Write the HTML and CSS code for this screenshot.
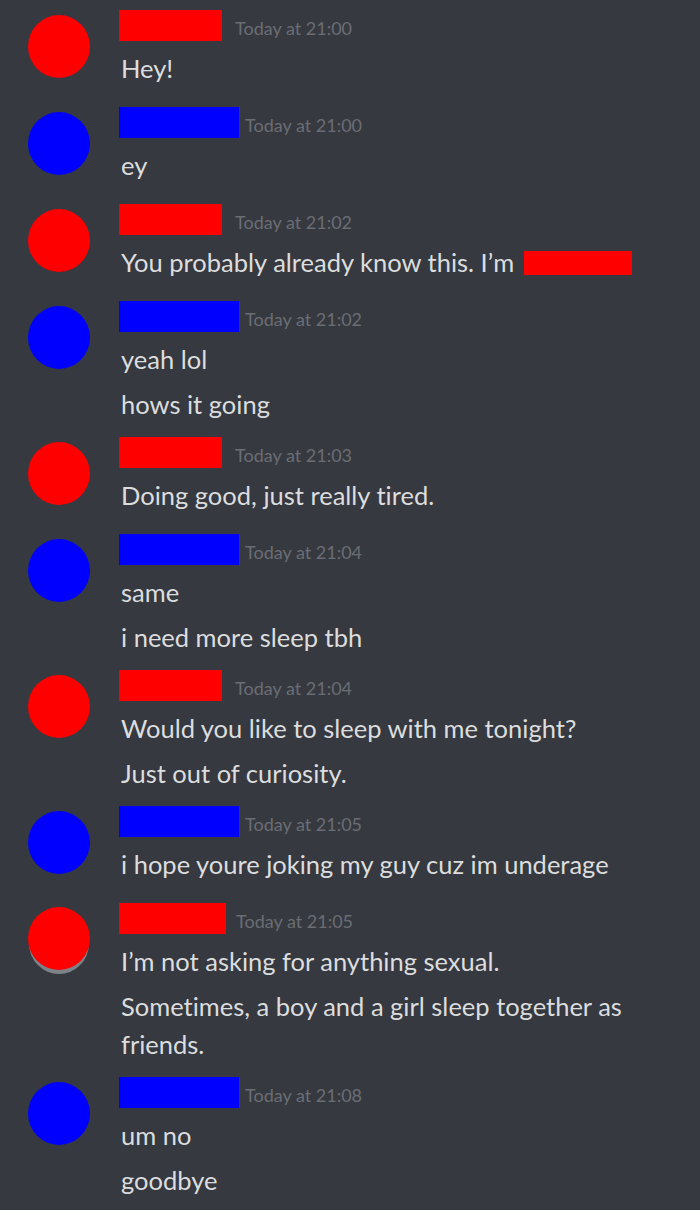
FILE: index.html
```html
<!DOCTYPE html>
<html lang="en">
<head>
<meta charset="utf-8">
<title>Chat</title>
<link rel="stylesheet" href="styles.css">
</head>
<body>
<main class="chat">
  <section class="group red">
    <div class="avatar"></div>
    <div class="body">
      <div class="header"><span class="name"></span><span class="time">Today at 21:00</span></div>
      <p class="msg">Hey!</p>
    </div>
  </section>
  <section class="group blue">
    <div class="avatar"></div>
    <div class="body">
      <div class="header"><span class="name"></span><span class="time">Today at 21:00</span></div>
      <p class="msg">ey</p>
    </div>
  </section>
  <section class="group red">
    <div class="avatar"></div>
    <div class="body">
      <div class="header"><span class="name"></span><span class="time">Today at 21:02</span></div>
      <p class="msg">You probably already know this. I’m <span class="redact"></span></p>
    </div>
  </section>
  <section class="group blue">
    <div class="avatar"></div>
    <div class="body">
      <div class="header"><span class="name"></span><span class="time">Today at 21:02</span></div>
      <p class="msg">yeah lol</p>
      <p class="msg">hows it going</p>
    </div>
  </section>
  <section class="group red">
    <div class="avatar"></div>
    <div class="body">
      <div class="header"><span class="name"></span><span class="time">Today at 21:03</span></div>
      <p class="msg">Doing good, just really tired.</p>
    </div>
  </section>
  <section class="group blue">
    <div class="avatar"></div>
    <div class="body">
      <div class="header"><span class="name"></span><span class="time">Today at 21:04</span></div>
      <p class="msg">same</p>
      <p class="msg">i need more sleep tbh</p>
    </div>
  </section>
  <section class="group red">
    <div class="avatar"></div>
    <div class="body">
      <div class="header"><span class="name"></span><span class="time">Today at 21:04</span></div>
      <p class="msg">Would you like to sleep with me tonight?</p>
      <p class="msg">Just out of curiosity.</p>
    </div>
  </section>
  <section class="group blue">
    <div class="avatar"></div>
    <div class="body">
      <div class="header"><span class="name"></span><span class="time">Today at 21:05</span></div>
      <p class="msg">i hope youre joking my guy cuz im underage</p>
    </div>
  </section>
  <section class="group red wide">
    <div class="avatar shadowed"></div>
    <div class="body">
      <div class="header"><span class="name"></span><span class="time">Today at 21:05</span></div>
      <p class="msg">I’m not asking for anything sexual.</p>
      <p class="msg">Sometimes, a boy and a girl sleep together as friends.</p>
    </div>
  </section>
  <section class="group blue">
    <div class="avatar"></div>
    <div class="body">
      <div class="header"><span class="name"></span><span class="time">Today at 21:08</span></div>
      <p class="msg">um no</p>
      <p class="msg">goodbye</p>
    </div>
  </section>
</main>
</body>
</html>
```
FILE: styles.css
```css
html, body {
  margin: 0;
  padding: 0;
  background: #36393f;
}

body {
  font-family: Lato, "Open Sans", "Liberation Sans", sans-serif;
  font-variant-ligatures: none;
  color: #dcddde;
  overflow: hidden;
}

.chat {
  display: flex;
  flex-direction: column;
  gap: 14px;
  padding: 10px 0 0 0;
}

.group {
  display: flex;
  align-items: flex-start;
  gap: 29px;
  padding: 0 20px 0 28px;
}

.group:has(.msg:only-of-type) {
  padding-bottom: 6px;
}

.avatar {
  flex: none;
  width: 62px;
  height: 63px;
  margin-top: 5px;
  border-radius: 50%;
}

.red .avatar { background: #ff0000; }
.blue .avatar { background: #0000ff; }

.avatar.shadowed {
  margin-top: 4px;
  box-shadow: 0 5px 0 -1px #7c8388;
}

.body {
  flex: 1;
  min-width: 0;
}

.header {
  display: flex;
  align-items: flex-start;
  height: 31px;
}

.name {
  flex: none;
  height: 31px;
}

.red .name { width: 103px; background: #ff0000; }
.blue .name { width: 120px; background: #0000ff; }
.red.wide .name { width: 107px; }

.time {
  font-size: 18px;
  line-height: 18px;
  padding-top: 9px;
  color: #6a6d74;
  white-space: nowrap;
}

.red .time { margin-left: 13px; }
.blue .time { margin-left: 6px; }
.red.wide .time { margin-left: 10px; }

.msg {
  margin: 7px 0 0 0;
  font-size: 25.5px;
  line-height: 38px;
  padding-left: 2px;
}

.header + .msg {
  margin-top: 8px;
}

.redact {
  display: inline-block;
  width: 108px;
  height: 24px;
  margin-left: 3px;
  background: #ff0000;
  vertical-align: -3px;
}
```
